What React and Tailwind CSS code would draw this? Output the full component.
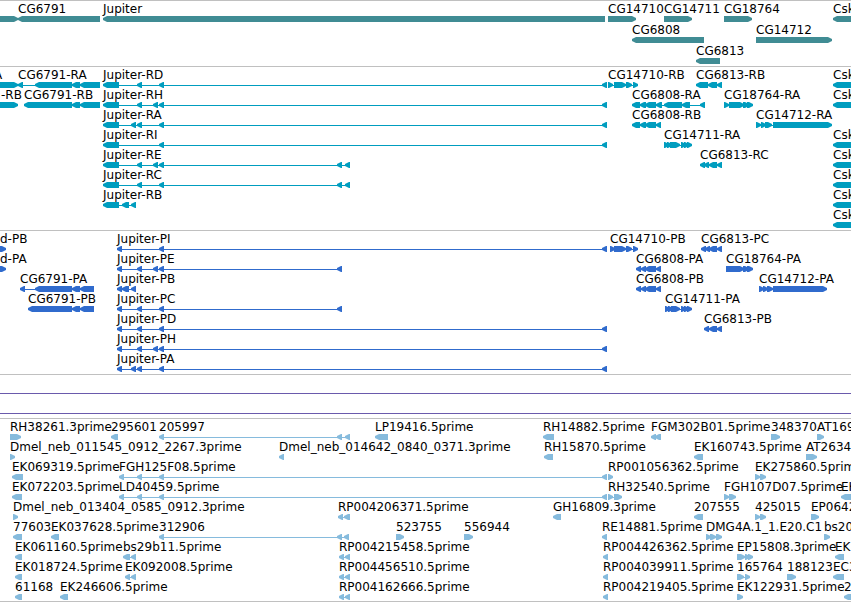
const JUPITER_TAIL = [602, 607];

// Each feature: [label, strand, exons, label start (when it differs from the first exon)]
const genes = [
  [
    ["", ">", [[-20, 18]]],
    ["CG6791", "<", [[18, 100]]],
    ["Jupiter", "<", [[103, 605]]],
    ["CG14710", ">", [[608, 636]]],
    ["CG14711", ">", [[664, 692]]],
    ["CG18764", ">", [[724, 752]]],
    ["Csk", "<", [[833, 900]]]
  ],
  [
    ["CG6808", "<", [[632, 704]]],
    ["CG14712", ">", [[756, 832]]]
  ],
  [
    ["CG6813", "<", [[696, 720]]]
  ]
];

const csk = ["Csk", "<", [[833, 900]]];

const transcripts = [
  [
    ["A", ">", [[-20, 18]], -6],
    ["CG6791-RA", "<", [[18, 23], [35, 72], [72, 80], [80, 100]]],
    ["Jupiter-RD", "<", [[103, 119], [137, 142], [159, 164], JUPITER_TAIL]],
    ["CG14710-RB", ">", [[608, 613], [614, 626], [626, 632], [633, 638]]],
    ["CG6813-RB", "<", [[696, 708], [708, 717], [717, 722]]],
    csk
  ],
  [
    ["-RB", ">", [[-20, 18]], 1],
    ["CG6791-RB", "<", [[24, 72], [72, 80], [80, 100]]],
    ["Jupiter-RH", "<", [[103, 119], [137, 142], [153, 158], [159, 164], JUPITER_TAIL]],
    ["CG6808-RA", "<", [[632, 640], [640, 646], [645, 656], [656, 662], [664, 682], [682, 690], [700, 705]]],
    ["CG18764-RA", ">", [[724, 729], [729, 744], [743, 749], [747, 753]]],
    csk
  ],
  [
    ["Jupiter-RA", "<", [[103, 119], [131, 136], [137, 142], [159, 164], JUPITER_TAIL]],
    ["CG6808-RB", "<", [[632, 640], [640, 646], [645, 656], [656, 661]]],
    ["CG14712-RA", ">", [[756, 761], [761, 766], [765, 772], [773, 832]]]
  ],
  [
    ["Jupiter-RI", "<", [[103, 119], [159, 164], JUPITER_TAIL]],
    ["CG14711-RA", ">", [[664, 669], [667, 672], [670, 680], [681, 686], [684, 689], [687, 692]]],
    csk
  ],
  [
    ["Jupiter-RE", "<", [[103, 119], [137, 142], [153, 158], [159, 164], [337, 342], [345, 350]]],
    ["CG6813-RC", "<", [[700, 705], [704, 709], [709, 717], [717, 722]]],
    csk
  ],
  [
    ["Jupiter-RC", "<", [[103, 119], [137, 142], [159, 164], [337, 342], [345, 350]]],
    csk
  ],
  [
    ["Jupiter-RB", "<", [[103, 119], [122, 129], [131, 136]]],
    csk
  ],
  [csk]
];

const proteins = [
  [
    ["d-PB", ">", [[-10, 6]], 0],
    ["Jupiter-PI", "<", [[117, 122], [159, 164], JUPITER_TAIL]],
    ["CG14710-PB", ">", [[610, 615], [614, 626], [626, 632], [633, 638]]],
    ["CG6813-PC", "<", [[701, 706], [705, 710], [709, 717], [717, 722]]]
  ],
  [
    ["d-PA", ">", [[-10, 6]], 0],
    ["Jupiter-PE", "<", [[117, 122], [137, 142], [153, 158], [159, 164], [337, 342]]],
    ["CG6808-PA", "<", [[636, 641], [641, 646], [645, 656], [656, 661]]],
    ["CG18764-PA", ">", [[726, 744], [743, 749], [747, 753]]]
  ],
  [
    ["CG6791-PA", "<", [[20, 25], [35, 72], [72, 80], [80, 94]]],
    ["Jupiter-PB", "<", [[117, 122], [122, 129], [131, 136]]],
    ["CG6808-PB", "<", [[636, 641], [641, 646], [645, 656], [656, 661]]],
    ["CG14712-PA", ">", [[759, 764], [763, 768], [767, 773], [773, 827]]]
  ],
  [
    ["CG6791-PB", "<", [[28, 72], [72, 80], [80, 94]]],
    ["Jupiter-PC", "<", [[117, 122], [137, 142], [159, 164], [337, 342]]],
    ["CG14711-PA", ">", [[665, 670], [668, 673], [671, 680], [681, 686], [684, 689], [687, 692]]]
  ],
  [
    ["Jupiter-PD", "<", [[117, 122], [137, 142], [159, 164], JUPITER_TAIL]],
    ["CG6813-PB", "<", [[704, 709], [709, 717], [717, 722]]]
  ],
  [
    ["Jupiter-PH", "<", [[117, 122], [137, 142], [153, 158], [159, 164], JUPITER_TAIL]]
  ],
  [
    ["Jupiter-PA", "<", [[117, 122], [131, 136], [137, 142], [159, 164], JUPITER_TAIL]]
  ]
];

const ests = [
  [
    ["RH38261.3prime", ">", [[10, 21]]],
    ["295601", "<", [[111, 118]]],
    ["205997", "<", [[159, 164], [337, 342], [345, 350]]],
    ["LP19416.5prime", "<", [[375, 388]]],
    ["RH14882.5prime", "<", [[543, 554]]],
    ["FGM302B01.5prime", "<", [[651, 656], [655, 661]]],
    ["348370", ">", [[771, 780]]],
    ["AT169", ">", [[817, 824]]]
  ],
  [
    ["Dmel_neb_011545_0912_2267.3prime", ">", [[10, 15]]],
    ["Dmel_neb_014642_0840_0371.3prime", "<", [[279, 284]]],
    ["RH15870.5prime", "<", [[544, 553]]],
    ["EK160743.5prime", "<", [[694, 703]]],
    ["AT2634", ">", [[806, 817]]]
  ],
  [
    ["EK069319.5prime", "<", [[12, 23]]],
    ["FGH125F08.5prime", "<", [[119, 124], [137, 142], [159, 164], JUPITER_TAIL]],
    ["RP001056362.5prime", ">", [[608, 613]]],
    ["EK275860.5prime", ">", [[755, 760], [760, 766]]]
  ],
  [
    ["EK072203.5prime", "<", [[12, 22]]],
    ["LD40459.5prime", "<", [[119, 124], [137, 142], [159, 164], JUPITER_TAIL]],
    ["RH32540.5prime", ">", [[608, 613], [614, 622]]],
    ["FGH107D07.5prime", ">", [[724, 729], [729, 736]]],
    ["EK", "<", [[841, 860]]]
  ],
  [
    ["Dmel_neb_013404_0585_0912.3prime", ">", [[13, 18]]],
    ["RP004206371.5prime", "<", [[338, 343], [344, 350]]],
    ["GH16809.3prime", "<", [[553, 561]]],
    ["207555", "<", [[694, 703]]],
    ["425015", ">", [[755, 760], [760, 766]]],
    ["EP0642", ">", [[811, 819]]]
  ],
  [
    ["77603", "<", [[13, 22]]],
    ["EK037628.5prime", "<", [[51, 59]]],
    ["312906", "<", [[159, 164], [337, 342], [344, 349]]],
    ["523755", ">", [[396, 404]]],
    ["556944", ">", [[464, 473]]],
    ["RE14881.5prime", "<", [[602, 607]]],
    ["DMG4A.1_1.E20.C1", ">", [[706, 711], [710, 716], [716, 722]]],
    ["bs20", ">", [[824, 830]]]
  ],
  [
    ["EK061160.5prime", "<", [[15, 22]]],
    ["bs29b11.5prime", "<", [[123, 130], [131, 136]]],
    ["RP004215458.5prime", "<", [[339, 344], [345, 350]]],
    ["RP004426362.5prime", "<", [[603, 608]]],
    ["EP15808.3prime", ">", [[737, 745], [745, 750], [748, 753]]],
    ["EK", "<", [[835, 844]]]
  ],
  [
    ["EK018724.5prime", "<", [[15, 22]]],
    ["EK092008.5prime", "<", [[125, 130], [131, 136]]],
    ["RP004456510.5prime", "<", [[339, 344], [345, 350]]],
    ["RP004039911.5prime", "<", [[603, 608]]],
    ["165764", ">", [[737, 744], [745, 750]]],
    ["188123", ">", [[787, 796]]],
    ["EC3", "<", [[833, 844]]]
  ],
  [
    ["61168", "<", [[15, 22]]],
    ["EK246606.5prime", "<", [[60, 68]]],
    ["RP004162666.5prime", "<", [[339, 344], [345, 350]]],
    ["RP004219405.5prime", "<", [[603, 608]]],
    ["EK122931.5prime", ">", [[737, 743]]],
    ["2", "<", [[844, 860]]]
  ]
];

// Box with a blunt arrow head on the side the strand points to
const exonPoints = (from, to, strand) => {
  if (strand === "<") {
    return `${from},2 ${from + 4},0 ${to},0 ${to},6 ${from + 4},6 ${from},4`;
  }
  return `${to},2 ${to - 4},0 ${from},0 ${from},6 ${to - 4},6 ${to},4`;
};

const Feature = ({ feature }) => {
  const [label, strand, exons, labelStart] = feature;
  const start = exons[0][0];
  const width = exons[exons.length - 1][1] - start;

  return (
    <>
      <span className="absolute bottom-1.5 whitespace-pre" style={{ left: labelStart ?? start }}>
        {label}
      </span>
      <svg
        className="absolute bottom-0 h-1.5 max-w-none"
        style={{ left: start, width }}
        viewBox={`0 0 ${width} 6`}
        fill="currentColor"
        aria-hidden="true"
      >
        <rect x="2" y="3" width={Math.max(width - 4, 0)} height="1" />
        {exons.map(([from, to], index) => (
          <polygon key={index} points={exonPoints(from - start, to - start, strand)} />
        ))}
      </svg>
    </>
  );
};

const Track = ({ name, rows, className, rowClassName = "h-5" }) => (
  <section aria-label={name} className={`border-t border-[#c0c0c0] ${className}`}>
    {rows.map((row, index) => (
      <div key={index} className={`relative overflow-x-clip ${rowClassName}`}>
        {row.map((feature, i) => (
          <Feature key={i} feature={feature} />
        ))}
      </div>
    ))}
  </section>
);

const App = () => {
  return (
    <main className="w-full overflow-hidden bg-white font-['DejaVu_Sans',sans-serif] text-[12px] leading-[14px] [&_span]:text-black">
      <Track name="Genes" rows={genes} className="pb-0.5 text-[#408c94]" rowClassName="h-[21px]" />
      <Track name="Transcripts" rows={transcripts} className="pt-px pb-0.5 text-[#009dbf]" />
      <Track name="Proteins" rows={proteins} className="pt-px pb-0.5 text-[#306bcd]" />

      {/* Features spanning the whole region */}
      <section aria-label="Region" className="border-t border-[#c0c0c0] pt-px pb-0.5">
        <div className="flex h-5 items-end pb-0.5">
          <div className="h-px w-full bg-[#6a5aac]" />
        </div>
        <div className="flex h-5 items-end pb-0.5">
          <div className="h-px w-full bg-[#6a5aac]" />
        </div>
      </section>

      <Track name="ESTs" rows={ests} className="border-b pt-px pb-px text-[#86bbdd]" />
    </main>
  );
};

export default App;
